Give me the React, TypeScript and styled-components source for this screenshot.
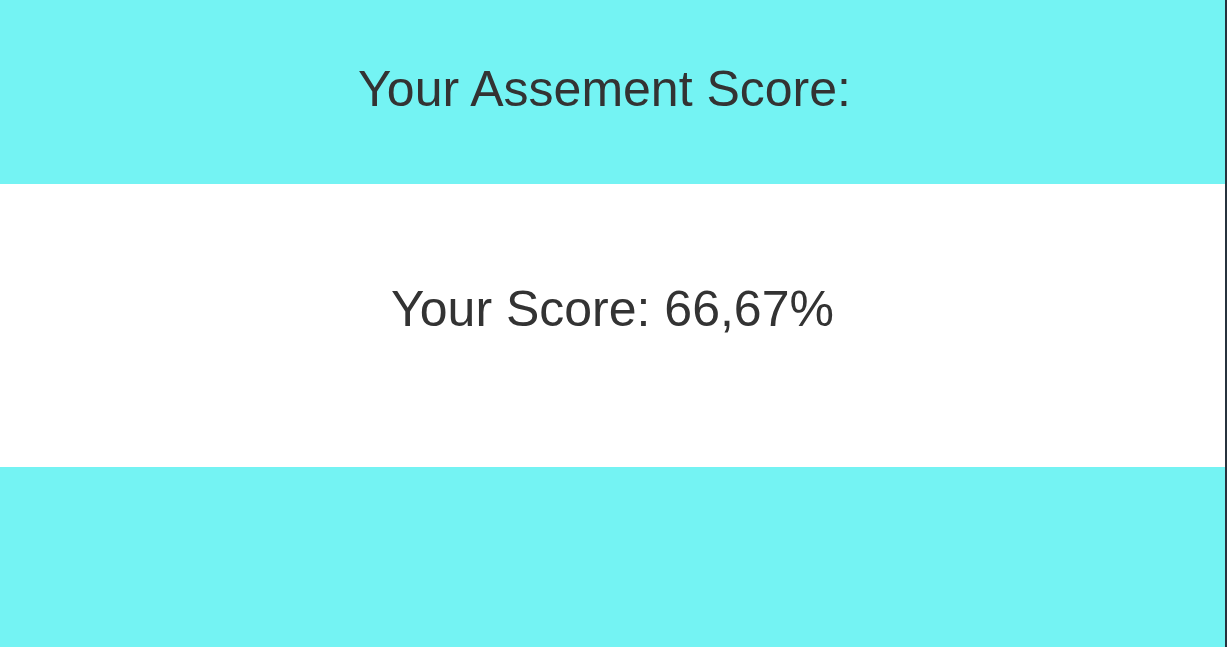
import React from 'react';
import styled, { createGlobalStyle } from 'styled-components';

const GlobalStyle = createGlobalStyle`
  html, body {
    margin: 0;
    padding: 0;
    background: #74f3f3;
  }
  body {
    font-family: 'Liberation Sans', Arial, sans-serif;
  }
`;

const Page = styled.div`
  display: flex;
  flex-direction: column;
  height: 647px;
  border-right: 2px solid #27323d;
  box-sizing: border-box;
`;

const Band = styled.section<{ $light?: boolean; $height: number }>`
  display: flex;
  align-items: center;
  justify-content: center;
  height: ${(p) => p.$height}px;
  flex-shrink: 0;
  background: ${(p) => (p.$light ? '#ffffff' : '#74f3f3')};
`;

const Title = styled.h1`
  margin: 0 16px 6px 0;
  font-size: 50px;
  font-weight: 400;
  color: #333333;
`;

const ScoreText = styled.p`
  margin: 0 0 34px 0;
  font-size: 50px;
  font-weight: 400;
  color: #333333;
`;

const App = () => {
  const score = 66.67;

  return (
    <>
      <GlobalStyle />
      <Page>
        <Band $height={184}>
          <Title>Your Assement Score:</Title>
        </Band>
        <Band $light $height={283}>
          <ScoreText>Your Score: {score.toFixed(2).replace('.', ',')}%</ScoreText>
        </Band>
        <Band $height={180} />
      </Page>
    </>
  );
};

export default App;
